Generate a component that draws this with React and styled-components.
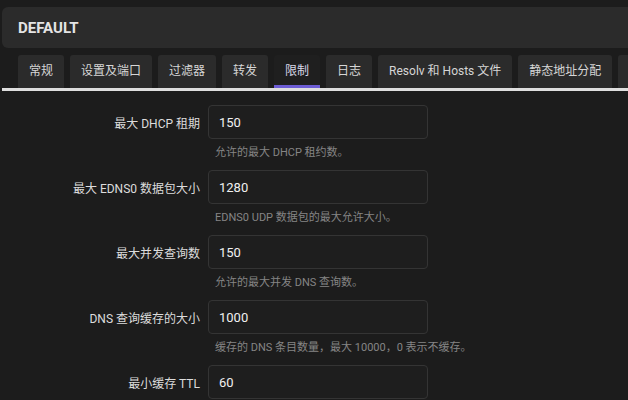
import React from "react";
import styled, { createGlobalStyle } from "styled-components";

const GlobalStyle = createGlobalStyle`
  html, body {
    margin: 0;
    background: #1c1c1c;
    font-family: Roboto, "Noto Sans CJK SC", sans-serif;
    color: #e6e6e6;
    overflow: hidden;
  }
`;

const Page = styled.div`
  padding: 7px 0 0 2px;
  width: 640px;
  overflow: hidden;
`;

const Header = styled.div`
  height: 41px;
  display: flex;
  align-items: center;
  padding-left: 16px;
  background: #2b2b2b;
  border-radius: 6px 0 0 6px;
  font-size: 15px;
  font-weight: 700;
  color: #e4e4e4;
`;

const TabBar = styled.div`
  margin-top: 7px;
  display: flex;
  gap: 6px;
  padding-left: 16px;
  white-space: nowrap;
  overflow: hidden;
  border-bottom: 3px solid #dedede;
`;

const Tab = styled.div`
  flex: none;
  padding: 0 11px;
  line-height: 33px;
  font-size: 12px;
  color: ${(p) => (p.$active ? "#d8d8e8" : "#d6d6d6")};
  background: ${(p) => (p.$active ? "#1f1f1f" : "#2b2b2b")};
  border-radius: 3px 3px 0 0;
  box-shadow: ${(p) => (p.$active ? "inset 0 -3px 0 #6c5cd4" : "none")};
`;

const Form = styled.div`
  padding-top: 14px;
  display: flex;
  flex-direction: column;
  gap: 9px;
`;

const Row = styled.div`
  display: grid;
  grid-template-columns: 198px 220px;
  column-gap: 8px;
  align-items: center;
`;

const Label = styled.label`
  text-align: right;
  font-size: 12px;
  color: #dcdcdc;
`;

const Input = styled.input`
  box-sizing: border-box;
  height: 34px;
  width: 220px;
  padding: 0 10px;
  background: #1e1e1e;
  border: 1px solid #343434;
  border-radius: 4px;
  color: #f0f0f0;
  font-family: inherit;
  font-size: 13px;
  outline: none;
`;

const Hint = styled.div`
  grid-column: 2;
  margin-top: 6px;
  padding-left: 7px;
  line-height: 16px;
  font-size: 11px;
  color: #858585;
  white-space: nowrap;
`;

const tabs = [
  "常规",
  "设置及端口",
  "过滤器",
  "转发",
  "限制",
  "日志",
  "Resolv 和 Hosts 文件",
  "静态地址分配",
  "IP 集",
];

const fields = [
  { label: "最大 DHCP 租期", value: "150", hint: "允许的最大 DHCP 租约数。" },
  { label: "最大 EDNS0 数据包大小", value: "1280", hint: "EDNS0 UDP 数据包的最大允许大小。" },
  { label: "最大并发查询数", value: "150", hint: "允许的最大并发 DNS 查询数。" },
  { label: "DNS 查询缓存的大小", value: "1000", hint: "缓存的 DNS 条目数量，最大 10000，0 表示不缓存。" },
  { label: "最小缓存 TTL", value: "60" },
];

export default function App() {
  return (
    <>
      <GlobalStyle />
      <Page>
        <Header>DEFAULT</Header>
        <TabBar>
          {tabs.map((t) => (
            <Tab key={t} $active={t === "限制"}>
              {t}
            </Tab>
          ))}
        </TabBar>
        <Form>
          {fields.map((f) => (
            <Row key={f.label}>
              <Label>{f.label}</Label>
              <Input defaultValue={f.value} />
              {f.hint && <Hint>{f.hint}</Hint>}
            </Row>
          ))}
        </Form>
      </Page>
    </>
  );
}
